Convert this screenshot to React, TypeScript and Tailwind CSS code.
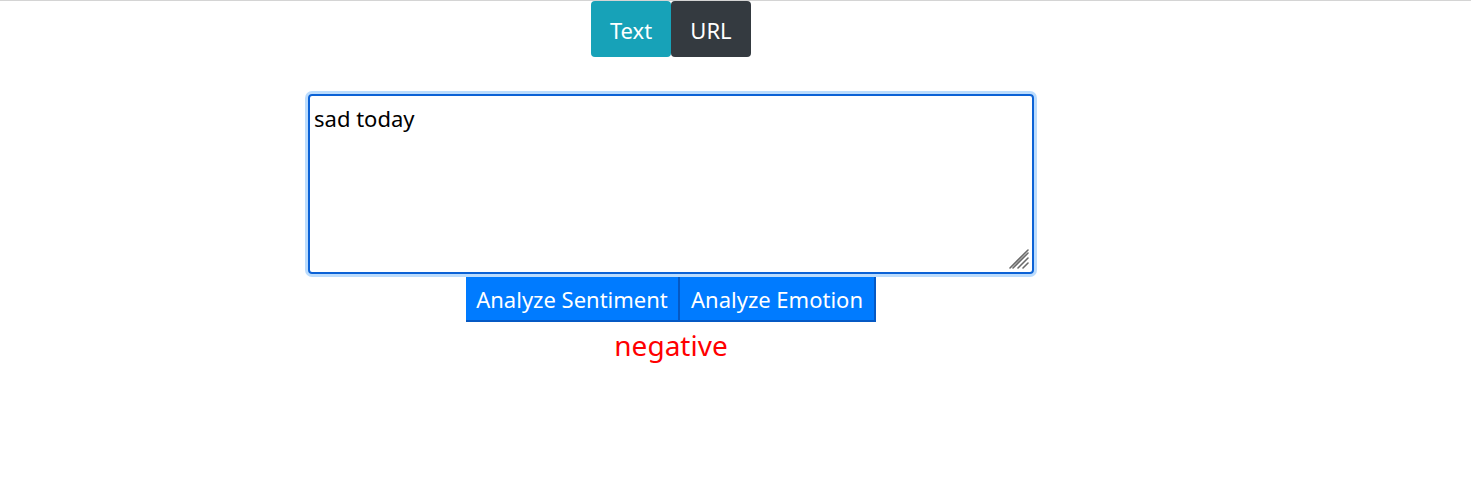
export default function App() {
  return (
    <div
      className="min-h-[486px] w-full border-t border-[#d4d4d4] bg-white"
      style={{ fontFamily: '"Noto Sans", "Open Sans", sans-serif' }}
    >
      <div className="flex w-[1342px] flex-col items-center">
        <div className="flex">
          <button className="flex h-[56px] w-[80px] items-center justify-center rounded-[4px] bg-[#17a2b8] pt-[3px] text-[22px] text-white">
            Text
          </button>
          <button className="flex h-[56px] w-[80px] items-center justify-center rounded-[4px] bg-[#343a40] pt-[3px] text-[22px] text-white">
            URL
          </button>
        </div>

        <div className="relative mt-[37px]">
          <textarea
            defaultValue="sad today"
            className="block h-[180px] w-[726px] resize-none rounded-[4px] border-2 border-[#0b62d6] px-[4px] pt-[7px] text-[22px] leading-[30px] text-black shadow-[0_0_0_3px_#bbdcfd] outline-none"
          />
          <svg
            className="pointer-events-none absolute right-[5px] bottom-[5px]"
            width="20"
            height="20"
            viewBox="0 0 20 20"
          >
            <g stroke="#6b6b6b" strokeWidth="1.6" strokeLinecap="round">
              <line x1="4" y1="19" x2="19" y2="4" />
              <line x1="9" y1="19" x2="19" y2="9" />
              <line x1="14" y1="19" x2="19" y2="14" />
              <line x1="1" y1="19" x2="19" y2="1" />
            </g>
          </svg>
        </div>

        <div className="mt-[2px] flex">
          <button className="h-[46px] w-[214px] border-r-2 border-b-2 border-[#0559c4] bg-[#007bff] pt-[2px] text-[22px] text-white">
            Analyze Sentiment
          </button>
          <button className="h-[46px] w-[196px] border-r-2 border-b-2 border-[#0559c4] bg-[#007bff] pt-[2px] text-[22px] text-white">
            Analyze Emotion
          </button>
        </div>

        <p className="mt-[4px] text-[28px] leading-[38px] text-[#ff0000]">negative</p>
      </div>
    </div>
  );
}
